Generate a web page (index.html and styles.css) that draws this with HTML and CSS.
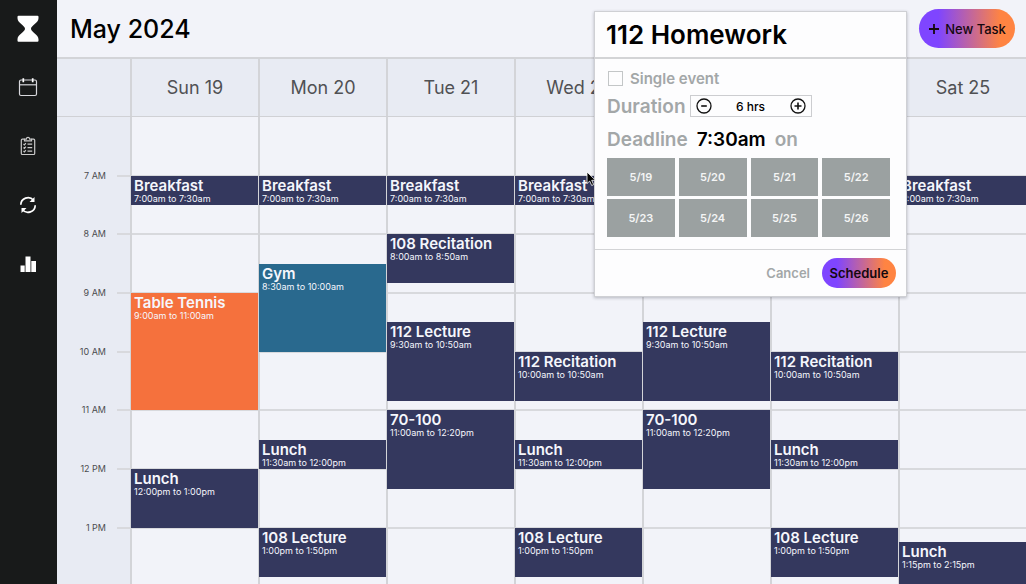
FILE: index.html
```html
<!DOCTYPE html>
<html lang="en">
<head>
<meta charset="utf-8">
<title>Calendar</title>
<link rel="stylesheet" href="styles.css">
</head>
<body>
<nav class="sidebar" aria-label="Main">
  <a class="nav-item logo" href="#" aria-label="Home">
    <svg width="22" height="28" viewBox="0 0 22 28"><path fill="#fff" d="M1.500.8h19q1 0 1 1v1.500C21.500 8 14 10.500 14 13.800S21.500 19.500 21.500 24.300v1.500q0 1-1 1h-19q-1 0-1-1v-1.500C.5 19.500 8 17.100 8 13.800S.5 8 .5 3.300V1.800q0-1 1-1z"/></svg>
  </a>
  <a class="nav-item" href="#" aria-label="Calendar">
    <svg width="20" height="20" viewBox="0 0 20 20" fill="none" stroke="#d8d8dd" stroke-width="1.200"><rect x="1.500" y="3" width="17" height="15.500" rx="1.500"/><path d="M1.500 7.800h17"/><path stroke="#fff" stroke-width="1.700" d="M5.300 1.200v4M14.700 1.200v4"/></svg>
  </a>
  <a class="nav-item" href="#" aria-label="Tasks">
    <svg width="20" height="20" viewBox="0 0 20 20" fill="none" stroke="#c9c9c9" stroke-width="1.200"><path d="M6.500 3.200H4.300q-1 0-1 1v13.300q0 1 1 1h11.400q1 0 1-1V4.200q0-1-1-1h-2.200"/><path d="M6.500 4.800V3.200h1.800q.2-1.900 1.700-1.900t1.700 1.900h1.800v1.600z"/><path d="M9.500 8.200h4.700M9.500 11.700h4.700M9.500 15.200h4.700M5.500 8l.9.900 1.500-1.700M5.500 11.500l.9.900 1.500-1.700M5.500 15l.9.900 1.500-1.700"/></svg>
  </a>
  <a class="nav-item" href="#" aria-label="Refresh">
    <svg width="20" height="20" viewBox="0 0 20 20" fill="none" stroke="#fff" stroke-width="1.700"><path d="M2.800 9.800A7.200 7.200 0 0 1 15.500 5.200M17.200 10.200A7.200 7.200 0 0 1 4.500 14.800"/><path fill="#fff" stroke="none" d="M16.500 2v5h-5zM3.500 18v-5h5z"/></svg>
  </a>
  <a class="nav-item" href="#" aria-label="Statistics">
    <svg width="20" height="20" viewBox="0 0 20 20" fill="#fff"><path d="M2.500 11.500h4.200V18H2.500zM7.500 2.500h5V18h-5zM13.300 7H18v11h-4.700z"/></svg>
  </a>
</nav>

<main class="main">
  <header class="topbar">
    <h1 class="month">May 2024</h1>
    <button class="new-task" type="button">
      <svg width="12" height="12" viewBox="0 0 12 12" stroke="#14080f" stroke-width="1.800"><path d="M6 1v10M1 6h10"/></svg>
      New Task
    </button>
  </header>

  <div class="days">
    <div class="corner"></div>
    <div class="day">Sun 19</div>
    <div class="day">Mon 20</div>
    <div class="day">Tue 21</div>
    <div class="day">Wed 22</div>
    <div class="day">Thu 23</div>
    <div class="day">Fri 24</div>
    <div class="day">Sat 25</div>
  </div>

  <div class="week">
    <div class="gutter"></div>
    <div class="line h7"></div>
    <div class="line h8"></div>
    <div class="line h9"></div>
    <div class="line h10"></div>
    <div class="line h11"></div>
    <div class="line h12"></div>
    <div class="line h13"></div>
    <div class="column sun"></div>
    <div class="column mon"></div>
    <div class="column tue"></div>
    <div class="column wed"></div>
    <div class="column thu"></div>
    <div class="column fri"></div>
    <div class="column sat"></div>
    <div class="hour h7">7 AM</div>
    <div class="hour h8">8 AM</div>
    <div class="hour h9">9 AM</div>
    <div class="hour h10">10 AM</div>
    <div class="hour h11">11 AM</div>
    <div class="hour h12">12 PM</div>
    <div class="hour h13">1 PM</div>

    <article class="event sun t0700"><h2>Breakfast</h2><p>7:00am to 7:30am</p></article>
    <article class="event sun t0900 orange"><h2>Table Tennis</h2><p>9:00am to 11:00am</p></article>
    <article class="event sun t1200"><h2>Lunch</h2><p>12:00pm to 1:00pm</p></article>

    <article class="event mon t0700"><h2>Breakfast</h2><p>7:00am to 7:30am</p></article>
    <article class="event mon t0830 teal"><h2>Gym</h2><p>8:30am to 10:00am</p></article>
    <article class="event mon t1130"><h2>Lunch</h2><p>11:30am to 12:00pm</p></article>
    <article class="event mon t1300"><h2>108 Lecture</h2><p>1:00pm to 1:50pm</p></article>

    <article class="event tue t0700"><h2>Breakfast</h2><p>7:00am to 7:30am</p></article>
    <article class="event tue t0800"><h2>108 Recitation</h2><p>8:00am to 8:50am</p></article>
    <article class="event tue t0930"><h2>112 Lecture</h2><p>9:30am to 10:50am</p></article>
    <article class="event tue t1100"><h2>70-100</h2><p>11:00am to 12:20pm</p></article>

    <article class="event wed t0700"><h2>Breakfast</h2><p>7:00am to 7:30am</p></article>
    <article class="event wed t1000"><h2>112 Recitation</h2><p>10:00am to 10:50am</p></article>
    <article class="event wed t1130"><h2>Lunch</h2><p>11:30am to 12:00pm</p></article>
    <article class="event wed t1300"><h2>108 Lecture</h2><p>1:00pm to 1:50pm</p></article>

    <article class="event thu t0930"><h2>112 Lecture</h2><p>9:30am to 10:50am</p></article>
    <article class="event thu t1100"><h2>70-100</h2><p>11:00am to 12:20pm</p></article>

    <article class="event fri t1000"><h2>112 Recitation</h2><p>10:00am to 10:50am</p></article>
    <article class="event fri t1130"><h2>Lunch</h2><p>11:30am to 12:00pm</p></article>
    <article class="event fri t1300"><h2>108 Lecture</h2><p>1:00pm to 1:50pm</p></article>

    <article class="event sat t0700"><h2>Breakfast</h2><p>7:00am to 7:30am</p></article>
    <article class="event sat t1315"><h2>Lunch</h2><p>1:15pm to 2:15pm</p></article>
  </div>
</main>

<form class="dialog" role="dialog" aria-labelledby="dialog-title">
  <h2 class="dialog-title" id="dialog-title">112 Homework</h2>
  <div class="dialog-body">
    <label class="single"><input class="check" type="checkbox">Single event</label>
    <div class="field">
      <span class="label">Duration</span>
      <div class="stepper">
        <button class="step" type="button" aria-label="Less">
          <svg width="16" height="16" viewBox="0 0 16 16" fill="none" stroke="#111" stroke-width="1.300"><circle cx="8" cy="8" r="7"/><path stroke-width="1.600" d="M5.200 8h5.600"/></svg>
        </button>
        <output>6 hrs</output>
        <button class="step" type="button" aria-label="More">
          <svg width="16" height="16" viewBox="0 0 16 16" fill="none" stroke="#111" stroke-width="1.300"><circle cx="8" cy="8" r="7"/><path stroke-width="1.600" d="M4.500 8h7M8 4.500v7"/></svg>
        </button>
      </div>
    </div>
    <div class="field deadline">
      <span class="label">Deadline</span>
      <span class="time">7:30am</span>
      <span class="label">on</span>
    </div>
    <div class="dates">
      <button class="date" type="button">5/19</button>
      <button class="date" type="button">5/20</button>
      <button class="date" type="button">5/21</button>
      <button class="date" type="button">5/22</button>
      <button class="date" type="button">5/23</button>
      <button class="date" type="button">5/24</button>
      <button class="date" type="button">5/25</button>
      <button class="date" type="button">5/26</button>
    </div>
  </div>
  <footer class="actions">
    <button class="cancel" type="button">Cancel</button>
    <button class="schedule" type="submit">Schedule</button>
  </footer>
</form>

<svg class="cursor" width="12" height="17" viewBox="0 0 12 17"><path fill="#000" stroke="#fff" stroke-width=".8" d="M1 1v11.500l2.700-2.400 2 4.400 2-.9-2-4.300h3.800z"/></svg>
</body>
</html>
```

FILE: styles.css
```css
* {
  box-sizing: border-box;
}

body {
  margin: 0;
  display: flex;
  height: 100vh;
  overflow: hidden;
  background: #f2f3f9;
  color: #000;
  font-family: Inter, "Open Sans", sans-serif;
}

h1, h2, p {
  margin: 0;
}

button {
  font-family: inherit;
  padding: 0;
  border: 0;
  background: none;
}

svg {
  display: block;
}

/* Sidebar */
.sidebar {
  flex: none;
  width: 57px;
  display: flex;
  flex-direction: column;
  padding-right: 2px;
  background: #181a1a;
}

.nav-item {
  height: 59px;
  display: grid;
  place-items: center;
}

.logo {
  height: 57px;
}

/* Top bar */
.main {
  flex: 1;
  min-width: 0;
  overflow: hidden;
}

.topbar {
  height: 59px;
  display: flex;
  align-items: center;
  justify-content: space-between;
  padding: 0 11px 0 13px;
  border-bottom: 2px solid #d3d4d8;
}

.month {
  font-size: 25px;
  font-weight: 500;
}

.new-task {
  display: flex;
  align-items: center;
  justify-content: center;
  gap: 5px;
  width: 96px;
  height: 39px;
  border-radius: 20px;
  background: linear-gradient(90deg, #7f45ff 20%, #ff8442 85%);
  color: #14080f;
  font-size: 13px;
  font-weight: 500;
  white-space: nowrap;
}

/* Week */
.days,
.week {
  display: grid;
  grid-template-columns: 73px repeat(7, 1fr);
}

.days {
  height: 58px;
  background: #e8ebf3;
  border-bottom: 1px solid #d0d1d5;
}

.day {
  display: grid;
  place-items: center;
  border-left: 2px solid #d3d4d8;
  color: #505154;
  font-size: 18px;
}

/* Each grid row is ten minutes, starting at 6 AM */
.week {
  grid-template-rows: repeat(54, 1fr);
  height: 528px;
}

.gutter {
  grid-area: 1 / 1 / -1 / 2;
  background: #e8ebf3;
}

.column {
  grid-row: 1 / -1;
  border-left: 2px solid #d3d4d8;
}

.line {
  grid-column: 1 / -1;
  height: 2px;
  margin-left: 60px;
  margin-top: -1px;
  background: #d8d9dd;
}

.hour {
  grid-column: 1;
  height: 16px;
  margin-top: -8px;
  padding-right: 24px;
  text-align: right;
  color: #4c4d50;
  font-size: 9px;
  line-height: 16px;
}

.sun { grid-column: 2; }
.mon { grid-column: 3; }
.tue { grid-column: 4; }
.wed { grid-column: 5; }
.thu { grid-column: 6; }
.fri { grid-column: 7; }
.sat { grid-column: 8; }

.h7 { grid-row: 7; }
.h8 { grid-row: 13; }
.h9 { grid-row: 19; }
.h10 { grid-row: 25; }
.h11 { grid-row: 31; }
.h12 { grid-row: 37; }
.h13 { grid-row: 43; }

.event {
  min-height: 0;
  margin-left: 1px;
  padding: 1px 3px;
  overflow: hidden;
  background: #34385e;
  color: #f5f6fc;
  white-space: nowrap;
}

.event h2 {
  font-size: 15px;
  font-weight: 600;
  line-height: 17px;
}

.event p {
  font-size: 9px;
  line-height: 10px;
}

.orange { background: #f5713d; }
.teal { background: #29698e; }

.t0700 { grid-row: 7 / span 3; }
.t0800 { grid-row: 13 / span 5; }
.t0830 { grid-row: 16 / span 9; }
.t0900 { grid-row: 19 / span 12; }
.t0930 { grid-row: 22 / span 8; }
.t1000 { grid-row: 25 / span 5; }
.t1100 { grid-row: 31 / span 8; }
.t1130 { grid-row: 34 / span 3; }
.t1200 { grid-row: 37 / span 6; }
.t1300 { grid-row: 43 / span 5; }
.t1315 { grid-row: 44 / span 6; margin-top: 5px; }

/* Task dialog */
.dialog {
  position: absolute;
  top: 11px;
  right: 119px;
  width: 313px;
  border: 1px solid #cfd0d4;
  background: #fdfdfe;
  box-shadow: 0 1px 3px rgba(40, 42, 60, .3);
}

.dialog-title {
  padding: 0 11px;
  border-bottom: 2px solid #d3d4d6;
  font-size: 26px;
  font-weight: 600;
  line-height: 45px;
}

.dialog-body {
  padding: 8px 16px 12px 12px;
}

.single {
  display: flex;
  align-items: center;
  gap: 7px;
  height: 22px;
  color: #a3a7a8;
  font-size: 15px;
  font-weight: 600;
}

.check {
  appearance: none;
  width: 15px;
  height: 15px;
  margin: 0 0 0 1px;
  border: 1px solid #c3c6c7;
}

.field {
  display: flex;
  align-items: center;
  height: 34px;
  gap: 4px;
  font-size: 19px;
  font-weight: 600;
}

.label {
  color: #a3a7a8;
}

.deadline {
  height: 32px;
  gap: 9px;
}

.stepper {
  display: flex;
  align-items: center;
  justify-content: space-between;
  width: 122px;
  height: 22px;
  padding: 0 5px;
  border: 1px solid #cccdd0;
  font-size: 12px;
  font-weight: 500;
}

.dates {
  display: grid;
  grid-template-columns: repeat(4, 1fr);
  gap: 3px 4px;
  margin-top: 3px;
}

.date {
  height: 38px;
  background: #9ba1a1;
  color: #f4f5f5;
  font-size: 11px;
  font-weight: 600;
}

.actions {
  display: flex;
  align-items: center;
  justify-content: flex-end;
  gap: 12px;
  height: 47px;
  padding: 0 10px;
  border-top: 1px solid #d3d4d6;
}

.cancel {
  color: #a3a7a8;
  font-size: 13px;
  font-weight: 600;
}

.schedule {
  width: 74px;
  height: 30px;
  border-radius: 15px;
  background: linear-gradient(90deg, #7f45ff 20%, #ff8442 85%);
  color: #14080f;
  font-size: 13px;
  font-weight: 600;
}

.cursor {
  position: absolute;
  top: 171px;
  left: 586px;
}
```
